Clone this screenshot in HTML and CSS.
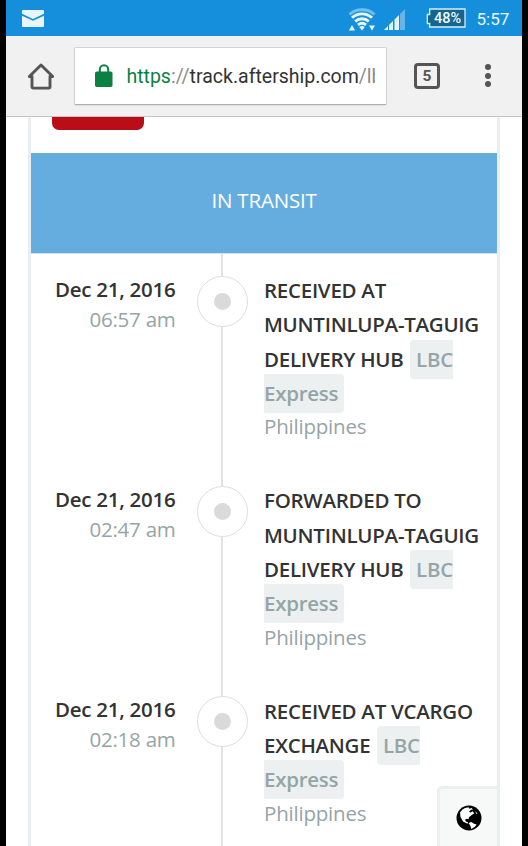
FILE: index.html
```html
<!DOCTYPE html>
<html lang="en">
<head>
<meta charset="utf-8">
<title>AfterShip tracking</title>
<link rel="stylesheet" href="styles.css">
</head>
<body>
<div class="phone">
  <header class="status">
    <svg class="mail" width="22" height="17" viewBox="0 0 22 17"><path fill="#e9f5fe" d="M1 0h20q1 0 1 1v2.800L11 9 0 3.800V1q0-1 1-1zM0 5.800l11 5 11-5V16q0 1-1 1H1q-1 0-1-1z"/></svg>
    <svg class="wifi" width="28" height="24" viewBox="0 0 28 24">
      <g fill="none" stroke-width="2.900"><path stroke="#70bff0" d="M1.500 6.500C8 .200 20 .200 26.500 6.500"/><g stroke="#e9f8ff"><path d="M4 9.800c5.500-5.200 14.500-5.200 20 0"/><path d="M7.200 13.400c4-3.600 9.600-3.600 13.600 0"/><path d="M10 16.900c2.500-2 5.500-2 8 0"/></g></g>
      <path fill="#e9f8ff" d="M11.200 19q2.800-1.800 5.600 0L14 22.400zM1 22.500l3-5.500 3 5.500zM21 17.500h6l-3 5z"/>
    </svg>
    <svg class="signal" width="22" height="22" viewBox="0 0 22 22"><path fill="#e0f5ff" d="M0 21l4-4v4zM5 16l4-4v9H5zM10.500 10.500L15 6v15h-4.500z"/><path fill="#65b5ea" d="M16 5l5-5v21h-5z"/></svg>
    <div class="battery">
      <svg width="40" height="21" viewBox="0 0 40 21"><path fill="#17648f" stroke="#d4effd" stroke-width="1.300" d="M3.700 1h35.300v18H3.700v-3.500H1.300v-9h2.400z"/></svg>
      <span>48%</span>
    </div>
    <span class="clock">5:57</span>
  </header>
  <nav class="toolbar">
    <svg class="home" width="26" height="27" viewBox="0 0 26 27"><path fill="none" stroke="#555" stroke-width="2.900" stroke-linejoin="round" d="M1.300 13.500L13 2l11.700 11.500H22v10.300q0 1.300-1.300 1.300H5.300Q4 25.100 4 23.800V13.500z"/></svg>
    <div class="address">
      <svg class="lock" width="18" height="23" viewBox="0 0 18 23"><path fill="none" stroke="#0b8043" stroke-width="2" d="M4.800 8V5.400a4.200 4.200 0 0 1 8.400 0V8"/><rect y="7.500" width="17.500" height="15.500" rx="1.800" fill="#0b8043"/></svg>
      <div class="url"><span class="scheme">https</span><span class="dim">://</span>track.aftership.com<span class="dim">/lb</span></div>
    </div>
    <div class="tabs">5</div>
    <div class="more"><i></i><i></i><i></i></div>
  </nav>
  <main class="page">
    <section class="card">
      <div class="action"></div>
      <h1 class="state">IN TRANSIT</h1>
      <ol class="events">
        <li class="event">
          <div class="when"><b>Dec 21, 2016</b><span>06:57 am</span></div>
          <div class="track"><div class="dot"></div></div>
          <div class="what"><p class="title">RECEIVED AT<br>MUNTINLUPA-TAGUIG<br>DELIVERY HUB <span class="carrier">LBC<br>Express</span></p><p class="place">Philippines</p></div>
        </li>
        <li class="event">
          <div class="when"><b>Dec 21, 2016</b><span>02:47 am</span></div>
          <div class="track"><div class="dot"></div></div>
          <div class="what"><p class="title">FORWARDED TO<br>MUNTINLUPA-TAGUIG<br>DELIVERY HUB <span class="carrier">LBC<br>Express</span></p><p class="place">Philippines</p></div>
        </li>
        <li class="event">
          <div class="when"><b>Dec 21, 2016</b><span>02:18 am</span></div>
          <div class="track"><div class="dot"></div></div>
          <div class="what"><p class="title">RECEIVED AT VCARGO<br>EXCHANGE <span class="carrier">LBC<br>Express</span></p><p class="place">Philippines</p></div>
        </li>
      </ol>
    </section>
    <div class="language">
      <svg width="26" height="26" viewBox="0 0 26 26"><circle cx="13" cy="13" r="12.500" fill="#000"/><path fill="#fff" d="M9 3l3.500-.8 1 1.500 2-.8 1.500 1.500-2 .3-2 2 1.700.7 2-1.200 1.500 2.200-2.500 1.500-2.700 2.300-.5 2-1.800-.4-1.700 1 1 1.700 2 .7-.5 1.500L7 16.500 4.500 12 4 7.500 6.500 4.500zM12.500 18l2.800-1 3.200 2 2 .3-1.500 2.500-3.700 2.200-.8-3zM19.500 6l2 3-1.500-.5z"/></svg>
    </div>
  </main>
</div>
</body>
</html>
```
FILE: styles.css
```css
* { box-sizing: border-box; }
body { margin: 0; background: #000; font-family: "Open Sans", sans-serif; }
.phone { width: 516px; height: 846px; margin-left: 6px; display: flex; flex-direction: column; overflow: hidden; background: #fff; }
.status { flex: 0 0 36px; display: flex; align-items: flex-start; background: #158fdb; font-family: Roboto, sans-serif; color: #eefaff; }
.mail { margin: 9.500px 0 0 15.500px; }
.wifi { margin: 7.500px 0 0 304px; }
.signal { margin: 8.500px 0 0 8px; }
.battery { position: relative; width: 40px; height: 21px; margin: 7.500px 0 0 20.500px; }
.battery svg { display: block; }
.battery span { position: absolute; inset: 0 0 0 3px; text-align: center; font-size: 14.500px; font-weight: 500; line-height: 21px; }
.clock { margin: 8px 0 0 10.500px; font-size: 17px; line-height: 22px; }
.toolbar { flex: 0 0 81px; display: flex; align-items: flex-start; background: #f1f1f1; border-bottom: 1px solid #c5c5c5; }
.home { margin: 26.500px 0 0 22px; }
.address { width: 313px; height: 58px; margin: 11px 0 0 20.400px; display: flex; background: #fff; border: 1px solid #d4d4d4; border-bottom-color: #b0b0b0; border-radius: 2px; box-shadow: 0 1px 1px #ddd; }
.lock { flex: none; margin: 16px 0 0 19.500px; }
.url { margin: 14px 0 0 13.500px; width: 249px; overflow: hidden; white-space: nowrap; font: 19.500px/30px Roboto, sans-serif; color: #333; }
.scheme { color: #0b8043; }
.dim { color: #8c8c8c; }
.tabs { width: 26px; height: 26px; margin: 27px 0 0 26.500px; border: 3px solid #555; border-radius: 4px; font: bold 15.500px/21px Roboto, sans-serif; color: #555; text-align: center; }
.more { margin: 28px 0 0 45.500px; display: flex; flex-direction: column; gap: 2.500px; }
.more i { width: 6px; height: 6px; border-radius: 50%; background: #555; }
.page { flex: 1; min-height: 0; position: relative; }
.card { height: 729px; width: 472px; margin-left: 22px; overflow: hidden; border: solid #eaeef0; border-width: 0 3px; }
.action { width: 92px; height: 12.500px; margin-left: 21px; background: #b90d18; border-radius: 0 0 7px 7px; }
.state { height: 101px; margin: 23px 0 0; background: #65addf; border-bottom: 1px solid #cfe2ee; text-align: center; font-size: 20.500px; font-weight: 400; letter-spacing: -.2px; line-height: 95px; color: #fff; }
.events { list-style: none; margin: 0; padding: 0; }
.event { display: flex; height: 210.300px; }
.when { width: 144.500px; padding-top: 20.300px; text-align: right; font-size: 20.500px; line-height: 30px; letter-spacing: -.25px; color: #95a5a6; }
.when b, .when span { display: block; }
.when b { font-weight: 580; color: #333; }
.track { width: 51px; margin-left: 21.500px; padding-top: 22px; background: linear-gradient(#e2e2e2, #e2e2e2) 24px 0 / 2px 100% no-repeat; }
.dot { width: 51px; height: 51px; display: grid; place-items: center; border: 1.500px solid #dedede; border-radius: 50%; background: #fff; }
.dot::before { content: ""; width: 17px; height: 17px; border-radius: 50%; background: #dadada; }
.what { margin-left: 16px; padding-top: 19.600px; white-space: nowrap; letter-spacing: -.27px; }
.what p { margin: 0; }
.title { font-size: 20.500px; font-weight: 580; line-height: 34.300px; color: #333; }
.carrier { margin-left: 1.500px; padding: 5px 6px 6px; background: #ecf0f1; border-radius: 4px; color: #95a5a6; }
.place { font-size: 20.500px; line-height: 32.500px; letter-spacing: -.2px; color: #95a5a6; }
.language { position: absolute; right: 22px; bottom: 0; width: 63px; height: 60px; display: flex; padding: 16px 0 0 15.500px; background: #f7f8f8; border: 3px solid #ebefef; border-bottom: 0; border-radius: 5px 0 0 0; }
```
